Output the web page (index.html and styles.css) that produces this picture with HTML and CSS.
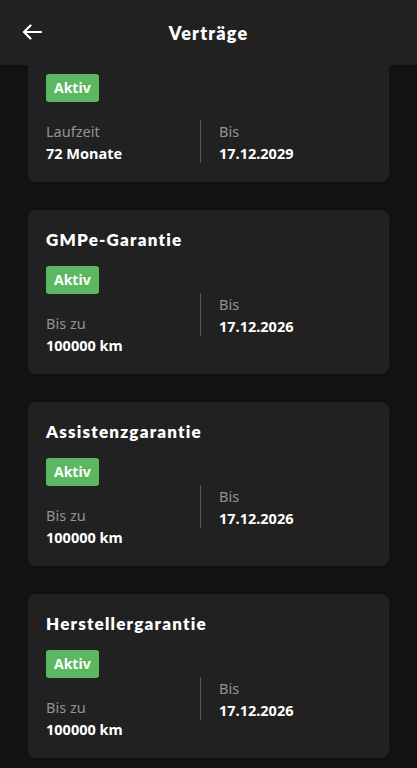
FILE: index.html
```html
<!DOCTYPE html>
<html lang="de">
  <head>
    <meta charset="UTF-8" />
    <meta name="viewport" content="width=device-width, initial-scale=1.0" />
    <title>Verträge</title>
    <link rel="stylesheet" href="styles.css">
  </head>
  <body>
    <header class="topbar">
      <button class="back-btn" aria-label="Zurück">
        <svg width="20" height="16" viewBox="0 0 20 16" fill="none" stroke="#fff" stroke-width="2.2" stroke-linecap="round" stroke-linejoin="round">
          <path d="M19 8H2" />
          <path d="M8.5 1.5L2 8l6.5 6.5" />
        </svg>
      </button>
      <h1 class="topbar-title">Verträge</h1>
      <span></span>
    </header>

    <main class="scroll-area">
      <!-- list is scrolled down, top of the first card sits under the bar -->
      <div class="contracts scrolled">
        <div class="card">
          <div class="card-body">
            <div class="col-left">
              <span class="badge">Aktiv</span>
              <div class="field">
                <div class="label">Laufzeit</div>
                <div class="value">72 Monate</div>
              </div>
            </div>
            <div class="col-right">
              <div class="label">Bis</div>
              <div class="value">17.12.2029</div>
            </div>
          </div>
        </div>

        <div class="card">
          <h3 class="card-title">GMPe-Garantie</h3>
          <div class="card-body">
            <div class="col-left">
              <span class="badge">Aktiv</span>
              <div class="field">
                <div class="label">Bis zu</div>
                <div class="value">100000 km</div>
              </div>
            </div>
            <div class="col-right raised">
              <div class="label">Bis</div>
              <div class="value">17.12.2026</div>
            </div>
          </div>
        </div>

        <div class="card">
          <h3 class="card-title">Assistenzgarantie</h3>
          <div class="card-body">
            <div class="col-left">
              <span class="badge">Aktiv</span>
              <div class="field">
                <div class="label">Bis zu</div>
                <div class="value">100000 km</div>
              </div>
            </div>
            <div class="col-right raised">
              <div class="label">Bis</div>
              <div class="value">17.12.2026</div>
            </div>
          </div>
        </div>

        <div class="card">
          <h3 class="card-title">Herstellergarantie</h3>
          <div class="card-body">
            <div class="col-left">
              <span class="badge">Aktiv</span>
              <div class="field">
                <div class="label">Bis zu</div>
                <div class="value">100000 km</div>
              </div>
            </div>
            <div class="col-right raised">
              <div class="label">Bis</div>
              <div class="value">17.12.2026</div>
            </div>
          </div>
        </div>
      </div>
    </main>
  </body>
</html>
```

FILE: styles.css
```css
* {
  box-sizing: border-box;
}

body {
  margin: 0;
  padding: 0;
  background: #121212;
  color: #fff;
  font-family: "Noto Sans", "Open Sans", sans-serif;
  height: 100vh;
  display: flex;
  flex-direction: column;
  overflow: hidden;
}

.topbar {
  flex: none;
  height: 65px;
  background: #212121;
  display: grid;
  grid-template-columns: 1fr auto 1fr;
  align-items: center;
}

.back-btn {
  justify-self: start;
  margin-left: 22px;
  margin-top: -2px;
  padding: 0;
  border: none;
  background: none;
  cursor: pointer;
  display: flex;
}

.topbar-title {
  margin: 0;
  font-family: Lato, "Noto Sans", sans-serif;
  font-weight: 800;
  font-size: 18px;
  letter-spacing: 1.2px;
}

.scroll-area {
  flex: 1;
  overflow: hidden;
}

.contracts {
  padding: 18px 28px;
  display: flex;
  flex-direction: column;
  gap: 28px;
}

.contracts.scrolled {
  margin-top: -27px;
}

.card {
  background: #212121;
  border-radius: 8px;
  padding: 18px 18px 18px;
}

.card-title {
  margin: 0 0 14px;
  font-family: Lato, "Noto Sans", sans-serif;
  font-weight: 800;
  font-size: 17px;
  line-height: 24px;
  letter-spacing: 1.2px;
}

.card-body {
  display: grid;
  grid-template-columns: 154px 1fr;
  align-items: end;
}

.col-left {
  display: flex;
  flex-direction: column;
  align-items: flex-start;
  gap: 18px;
}

.badge {
  display: inline-block;
  height: 28px;
  line-height: 28px;
  padding: 0 8px;
  border-radius: 3px;
  background: #5cb860;
  color: #fff;
  font-weight: 700;
  font-size: 14px;
}

.col-right {
  border-left: 1px solid #555;
  padding-left: 18px;
  height: 43px;
  margin-bottom: 1px;
}

.col-right.raised {
  margin-bottom: 20px;
}

.label {
  color: #939393;
  font-size: 14.5px;
  line-height: 22px;
}

.value {
  font-weight: 700;
  font-size: 14.5px;
  line-height: 22px;
}
```
